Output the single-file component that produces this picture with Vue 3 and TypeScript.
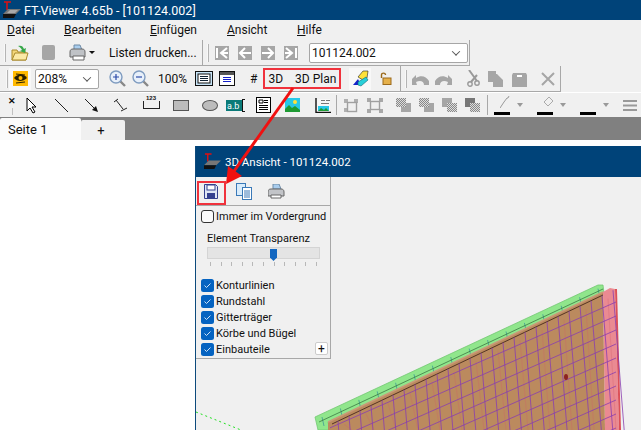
<template>
  <div class="app">
    <header class="titlebar">
      <svg class="logo" width="20" height="18" viewBox="0 0 20 18">
        <path d="M2 1h7M5 1v8" stroke="#e01010" stroke-width="1.5" fill="none" />
        <path d="M6 8h13l-5 5H1z" fill="#777" />
        <path d="M1 13h13l-2 4H1z" fill="#111" />
        <path d="M8 9h8l-3 3H5z" fill="#aaa" />
      </svg>
      <span>FT-Viewer 4.65b - [101124.002]</span>
    </header>

    <nav class="menubar">
      <span v-for="item in menu" :key="item.label" class="menu-item">
        <u>{{ item.label[0] }}</u>{{ item.label.slice(1) }}
      </span>
    </nav>

    <div class="band">
      <div class="group group-file">
        <i class="grip"></i>
        <svg width="18" height="18" viewBox="0 0 18 18">
          <path d="M1 6h5l1 2h8v8H1z" fill="#f3d67a" stroke="#a98a2c" />
          <path d="M1 16l3-7h13l-2 7z" fill="#fbe9a6" stroke="#a98a2c" />
          <path d="M7 2c3-1 5 0 6 3l2-1-1 5-5-2 2-1c-1-2-2-3-4-4z" fill="#37a84a" />
        </svg>
        <span class="stop"></span>
        <svg width="19" height="17" viewBox="0 0 19 17">
          <path d="M5 1h6l2 5H5z" fill="#a9cdee" stroke="#6f8ba6" />
          <path d="M1 8c0-2 1-3 3-3h9c2 0 3 1 3 3v5H1z" fill="#bfc2c6" stroke="#666" />
          <path d="M4 12h11v4H4z" fill="#fff" stroke="#666" />
        </svg>
        <b class="caret"></b>
        <span class="print-list">Listen drucken...</span>
      </div>
      <div class="group group-nav">
        <i class="grip"></i>
        <span v-for="n in navIcons" :key="n" class="nav-btn">
          <svg width="14" height="14" viewBox="0 0 14 14">
            <path :d="n" fill="none" stroke="#fff" stroke-width="2" />
          </svg>
        </span>
        <div class="combo combo-file"><span>101124.002</span><b class="chev"></b></div>
      </div>
    </div>

    <div class="band band-second">
      <div class="group group-view">
        <i class="grip"></i>
        <span class="eye-btn">
          <svg width="15" height="15" viewBox="0 0 15 15">
            <rect width="15" height="15" fill="#ffb900" />
            <path d="M1 7c3-4 9-5 13 0-4 4-10 4-13 0z" fill="#2a2000" />
            <circle cx="7.5" cy="7" r="2" fill="#ffb900" />
            <path d="M3 3l9 1M3 12l9-1" stroke="#2a2000" />
          </svg>
        </span>
        <div class="combo combo-zoom"><span>208%</span><b class="chev"></b></div>
        <svg v-for="sign in ['M-3 0h6M0-3v6', 'M-3 0h6']" :key="sign" class="magnifier" width="17" height="17" viewBox="0 0 17 17">
          <path d="M11 11l5 5" stroke="#888" stroke-width="2.4" />
          <circle cx="7" cy="7" r="6" fill="#e8f0fa" stroke="#7f9cc0" stroke-width="1.4" />
          <path :d="sign" transform="translate(7 7)" stroke="#2a4aa8" stroke-width="1.2" />
        </svg>
        <span class="txt hundred">100%</span>
        <svg class="page-a" width="18" height="15" viewBox="0 0 18 15">
          <rect x=".5" y=".5" width="17" height="14" fill="#c8e4f7" stroke="#111" />
          <rect x="3" y="3" width="12" height="9" fill="#fff" stroke="#111" />
          <path d="M5 5.500h8M5 7.500h8M5 9.500h8" stroke="#123" />
        </svg>
        <svg class="page-b" width="16" height="15" viewBox="0 0 16 15">
          <rect x=".5" y=".5" width="15" height="14" fill="#fff" stroke="#111" />
          <rect x="1" y="1" width="14" height="3" fill="#555" />
          <path d="M4 6.500h8M4 8.500h8M4 10.500h8" stroke="#1420c8" />
        </svg>
        <span class="txt hash">#</span>
        <div class="plan-box">
          <span class="txt">3D</span>
          <span class="txt">3D Plan</span>
        </div>
        <span class="cube-btn">
          <svg width="17" height="17" viewBox="0 0 17 17">
            <path d="M1 15l5-6 3 6z" fill="#1420c8" />
            <path d="M6 7l5-6h5l-1 7-4 2z" fill="#ffe23a" stroke="#222" stroke-width=".6" />
            <path d="M6 12l8-5 2 3-7 6-3-1z" fill="#27cfd8" stroke="#167" stroke-width=".6" />
          </svg>
        </span>
        <svg class="lock" width="12" height="13" viewBox="0 0 12 13">
          <path d="M1.500 6V3c0-2.500 4-2.500 4 0" fill="none" stroke="#9b6a1c" stroke-width="1.4" />
          <rect x="3" y="6" width="8" height="6.500" fill="#e5b04a" stroke="#9b6a1c" />
        </svg>
      </div>
      <div class="group group-edit">
        <i class="grip"></i>
        <svg width="17" height="12" viewBox="0 0 17 12"><path d="M0 6l4-4v3c5-3 10-2 13 3v4H12c0-4-4-5-8-3l1 3H0z" fill="#a6a6a6" /></svg>
        <svg class="redo" width="17" height="12" viewBox="0 0 17 12"><path d="M17 6l-4-4v3C8 2 3 3 0 8v4h5c0-4 4-5 8-3l-1 3h5z" fill="#a6a6a6" /></svg>
        <svg class="scissors" width="13" height="17" viewBox="0 0 13 17">
          <path d="M2 0l8 11M10 5L4 12" stroke="#999" stroke-width="2" />
          <circle cx="3" cy="14" r="2.200" fill="none" stroke="#999" stroke-width="1.4" />
          <circle cx="10" cy="13" r="2.200" fill="none" stroke="#999" stroke-width="1.400" />
        </svg>
        <svg width="15" height="16" viewBox="0 0 15 16"><path d="M0 0h8v3h1l6 6v7H5v-5H0z" fill="#a6a6a6" /></svg>
        <svg width="15" height="16" viewBox="0 0 15 16"><path d="M1 2h13l1 2v12H0V4z" fill="#a6a6a6" /><rect x="5" y="4" width="5" height="2" fill="#fff" /></svg>
        <svg class="cross" width="14" height="14" viewBox="0 0 14 14"><path d="M1 1l12 12M13 1L1 13" stroke="#a6a6a6" stroke-width="2" /></svg>
      </div>
    </div>

    <div class="drawbar">
      <span class="draw-close">✕<i></i></span>
      <svg width="12" height="17" viewBox="0 0 12 17"><path d="M1 1v13l3-3 3 5 2-1-3-5h4z" fill="#fff" stroke="#000" /></svg>
      <svg class="d-line" width="13" height="13" viewBox="0 0 13 13"><path d="M0 0l13 13" stroke="#222" /></svg>
      <svg class="d-arrow" width="13" height="13" viewBox="0 0 13 13"><path d="M0 0l9 9" stroke="#222" /><path d="M13 13l-6-2 4-4z" fill="#111" /></svg>
      <svg class="d-dim" width="15" height="14" viewBox="0 0 15 14"><path d="M1 4l4-3M3 2l7 9M8 13l6-3" stroke="#222" fill="none" /></svg>
      <span class="d-measure"><em>123</em></span>
      <i class="d-rect"></i>
      <i class="d-ellipse"></i>
      <span class="d-text">a.b<b></b></span>
      <svg class="d-note" width="15" height="16" viewBox="0 0 15 16"><rect x=".5" y=".5" width="14" height="15" fill="#fff" stroke="#000" /><path d="M3 3h4v3H3zM8 3.500h4M8 5.500h4M3 8.500h9M3 10.500h9M3 12.500h9" stroke="#000" fill="none" /></svg>
      <svg class="d-image" width="15" height="14" viewBox="0 0 15 14"><rect width="15" height="14" fill="#27c8e8" /><circle cx="10" cy="4" r="2" fill="#ffe23a" /><path d="M0 11l4-4 3 3 3-2 5 4v2H0z" fill="#1e9a33" /></svg>
      <svg class="d-disk" width="16" height="15" viewBox="0 0 16 15"><rect x="1" y="1" width="14" height="13" fill="#f7f7f7" /><path d="M6 2.500h4M11 2.500h4M6 5.500h8" stroke="#777" fill="none" /><path d="M1 0v14.500h15" stroke="#111" stroke-width="1.400" fill="none" /><rect x="3" y="8" width="11" height="5" fill="#27c8e8" /><path d="M3 13l3-3 3 2 2-2 3 3z" fill="#1e9a33" /></svg>
      <i class="sep"></i>
      <svg class="d-frame" width="16" height="15" viewBox="0 0 16 15"><path d="M1 1h4v4H1zM11 1h4v4h-4zM1 10h4v4H1z" fill="#b0b0b0" /><rect x="4.500" y="4.500" width="9" height="9" fill="none" stroke="#a0a0a0" stroke-width="1.400" /></svg>
      <svg class="d-frame2" width="16" height="15" viewBox="0 0 16 15"><path d="M0 0h4v4H0zM12 0h4v4h-4zM0 11h4v4H0zM12 11h4v4h-4z" fill="#a8a8a8" /><rect x="3.500" y="3.500" width="9" height="8" fill="none" stroke="#a0a0a0" stroke-width="1.400" /></svg>
      <span v-for="(o, i) in orders" :key="i" class="overlap" :class="o"><i></i><i></i></span>
      <i class="sep sep-b"></i>
      <div class="swatch"><svg width="11" height="12" viewBox="0 0 11 12"><path d="M0 12l4-6 3-4 1 0 1-2" stroke="#999" fill="none" /></svg><b class="tri"></b><i></i></div>
      <div class="swatch"><svg width="11" height="12" viewBox="0 0 11 12"><path d="M1 6l5-5 4 4-5 5z" fill="none" stroke="#aaa" /></svg><b class="tri"></b><i></i></div>
      <div class="swatch"><span class="blank"></span><b class="tri"></b><i></i></div>
      <svg class="d-weight" width="14" height="11" viewBox="0 0 14 11"><path d="M0 1h14M0 5.500h14M0 10h14" stroke="#999" stroke-width="2" /></svg>
    </div>

    <div class="tabstrip">
      <span class="tab tab-active">Seite 1</span>
      <span class="tab tab-add">+</span>
    </div>

    <main class="workspace">
      <section class="win3d">
        <header class="win-title">
          <svg class="logo" width="19" height="17" viewBox="0 0 20 18">
            <path d="M2 1h7M5 1v8" stroke="#e01010" stroke-width="1.500" fill="none" />
            <path d="M6 8h13l-5 5H1z" fill="#777" />
            <path d="M1 13h13l-2 4H1z" fill="#111" />
          </svg>
          <span>3D Ansicht - 101124.002</span>
        </header>
        <div class="win-body">
          <aside class="panel">
            <div class="panel-tools">
              <span class="tool-save">
                <svg width="14" height="15" viewBox="0 0 14 15">
                  <path d="M.5.5h11l2 2v12H.5z" fill="#dfe6f5" stroke="#35408f" />
                  <rect x="3" y="1" width="8" height="5" fill="#fff" stroke="#35408f" />
                  <rect x="3" y="9" width="8" height="5" fill="#35408f" />
                </svg>
              </span>
              <svg class="tool-copy" width="16" height="17" viewBox="0 0 16 17">
                <rect x=".5" y=".5" width="9" height="12" fill="#d9ecfb" stroke="#3a79b8" />
                <rect x="6.500" y="4.500" width="9" height="12" fill="#fff" stroke="#3a79b8" />
                <path d="M8 8h6M8 10h6M8 12h6M8 14h6" stroke="#3a79b8" />
              </svg>
              <svg class="tool-print" width="17" height="15" viewBox="0 0 17 15">
                <path d="M5 0h6l2 5H5z" fill="#a9cdee" stroke="#6f8ba6" />
                <path d="M0 8c0-2 1-3 3-3h10c2 0 3 1 3 3v4H0z" fill="#c2c4c8" stroke="#666" />
                <path d="M3 11h10v3H3z" fill="#fff" stroke="#666" />
              </svg>
            </div>
            <label class="always">
              <i class="box-empty"></i>
              <span>Immer im Vordergrund</span>
            </label>
            <div class="slider-label">Element Transparenz</div>
            <div class="slider"><i class="thumb"></i></div>
            <div class="ticks"><i v-for="n in 11" :key="n"></i></div>
            <ul class="layers">
              <li v-for="layer in layers" :key="layer">
                <svg width="13" height="13" viewBox="0 0 13 13">
                  <rect width="13" height="13" rx="2.500" fill="#0563c1" />
                  <path d="M3.500 6.500l2 2 4-4" fill="none" stroke="#cfe3f7" />
                </svg>
                <span>{{ layer }}</span>
              </li>
            </ul>
            <span class="plus">+</span>
          </aside>

          <svg class="scene" width="445" height="253" viewBox="0 0 445 253">
            <line x1="0" y1="235" x2="45" y2="253" stroke="#22e022" stroke-dasharray="2 3" />
            <g transform="translate(-196 -177)">
              <polygon points="315,417 598,285 603,285 604,293 328,422 330,430 318,430" fill="#90e68c" stroke="#72c872" stroke-width=".8" />
              <line v-for="l in greenLines" :key="l.id" :x1="l.x1" :y1="l.y1" :x2="l.x2" :y2="l.y2" stroke="#3f9a96" stroke-width=".8" />
              <line x1="319" y1="422" x2="603" y2="289" stroke="#2f6b3a" stroke-width=".7" />
              <polygon points="603,292 610,288 615,289 619,430 605,430" fill="#ea8a92" />
              <polygon points="615,289 617,289 621,430 619,430" fill="#dc5058" />
              <polygon points="328,430 328,422 603,292 605,430" fill="#bb8a5e" />
              <line x1="328" y1="422" x2="603" y2="292" stroke="#c99a78" stroke-width="1.6" />
              <line x1="332" y1="424" x2="603" y2="295" stroke="#3a1e14" stroke-width=".8" />
              <line v-for="l in faintLines" :key="l.id" :x1="l.x1" :y1="l.y1" :x2="l.x2" :y2="l.y2" stroke="#d0606c" stroke-width=".7" opacity=".45" />
              <line v-for="l in gridLines" :key="l.id" :x1="l.x1" :y1="l.y1" :x2="l.x2" :y2="l.y2" stroke="#8a3fb0" stroke-width="1" opacity=".8" />
              <ellipse cx="566" cy="377" rx="2" ry="3" fill="#8c2420" />
            </g>
          </svg>
        </div>
      </section>
    </main>

    <svg class="pointer" width="641" height="430" viewBox="0 0 641 430">
      <path d="M293 88L232 174" stroke="#f01010" stroke-width="3" />
      <path d="M226 184L228 166 242 176z" fill="#f01010" />
    </svg>
    <i class="save-box"></i>
  </div>
</template>

<script setup lang="ts">
interface Segment {
  id: number;
  x1: number;
  y1: number;
  x2: number;
  y2: number;
}

const menu = [
  { label: 'Datei' },
  { label: 'Bearbeiten' },
  { label: 'Einfügen' },
  { label: 'Ansicht' },
  { label: 'Hilfe' },
];

const navIcons = [
  'M2 2v10M12 2L6 7l6 5M6 7h7',
  'M7 2L2 7l5 5M2 7h11',
  'M7 2l5 5-5 5M12 7H1',
  'M12 2v10M2 2l6 5-6 5M8 7H1',
];

const orders = ['o-a', 'o-b', 'o-c', 'o-d'];
const layers = ['Konturlinien', 'Rundstahl', 'Gitterträger', 'Körbe und Bügel', 'Einbauteile'];

const greenLines: Segment[] = Array.from({ length: 16 }, (_, i) => {
  const x = 322 + i * 18.4;
  const y = 419 - (x - 322) * 0.465;
  return { id: i, x1: x, y1: y - 2, x2: x + 2, y2: y + 7 };
});

// wall grid: tilted uprights plus rows that rise to the right
const topEdge = (x: number) => 424 - (x - 332) * 0.476;

const gridLines: Segment[] = [
  ...Array.from({ length: 26 }, (_, i) => {
    const x = 338 + i * 11;
    return { id: i, x1: x, y1: topEdge(x), x2: x + (430 - topEdge(x)) * 0.08, y2: 430 };
  }),
  ...Array.from({ length: 12 }, (_, i) => {
    const y = 302 + i * 14;
    return { id: 100 + i, x1: 616, y1: y, x2: 330, y2: y + 286 * 0.44 };
  }),
];

const faintLines: Segment[] = Array.from({ length: 13 }, (_, i) => {
  const x = 344 + i * 22;
  return { id: i, x1: x, y1: topEdge(x) + 6, x2: x + 8, y2: 430 };
});
</script>

<style scoped>
.app {
  position: relative;
  width: 641px;
  height: 430px;
  overflow: hidden;
  background: #fff;
  font-family: Roboto, "Liberation Sans", sans-serif;
  font-size: 12px;
  color: #111;
  display: flex;
  flex-direction: column;
}
.titlebar {
  height: 20px;
  flex: none;
  background: #004379;
  color: #fff;
  display: flex;
  align-items: center;
  padding-left: 2px;
  gap: 2px;
  font-size: 12.5px;
}
.menubar {
  height: 20px;
  flex: none;
  background: #f0f0f0;
  display: flex;
  align-items: center;
}
.menu-item:nth-child(1) { margin-left: 7px; width: 57px; }
.menu-item:nth-child(2) { width: 86px; }
.menu-item:nth-child(3) { width: 77px; }
.menu-item:nth-child(4) { width: 70px; }
.band {
  height: 26px;
  flex: none;
  background: #f0f0f0;
  display: flex;
}
.group {
  height: 25px;
  display: flex;
  align-items: center;
  border-right: 1px solid #a8a8a8;
  border-bottom: 1px solid #a8a8a8;
  box-sizing: content-box;
}
.grip {
  width: 1px;
  height: 18px;
  background: #f8f8f8;
  border: 1px solid #b4b4b4;
  border-width: 0 1px 0 0;
  flex: none;
}
.group-file { width: 203px; padding-left: 4px; box-sizing: border-box; height: 26px; }
.group-file svg:nth-of-type(1) { margin-left: 5px; }
.stop {
  width: 13px;
  height: 15px;
  border-radius: 2px;
  background: #a6a6a6;
  margin-left: 13px;
}
.group-file svg:nth-of-type(2) { margin-left: 14px; }
.caret {
  width: 0;
  height: 0;
  border: 3px solid transparent;
  border-top: 3px solid #111;
  border-bottom: 0;
  margin-left: 1px;
}
.print-list { margin-left: 14px; white-space: nowrap; }
.group-nav { width: 267px; padding-left: 4px; box-sizing: border-box; height: 26px; }
.nav-btn {
  width: 14px;
  height: 14px;
  background: #a6a6a6;
  margin-left: 9px;
  display: flex;
}
.nav-btn:nth-of-type(1) { margin-left: 6px; }
.combo {
  height: 20px;
  box-sizing: border-box;
  background: #fff;
  border: 1px solid #a6a6a6;
  border-radius: 2px;
  display: flex;
  align-items: center;
  justify-content: space-between;
  padding: 0 8px 0 2px;
  flex: none;
}
.combo-file { width: 159px; margin-left: 11px; }
.combo-zoom { width: 64px; margin-left: 4px; }
.chev {
  width: 5px;
  height: 5px;
  border-right: 1px solid #555;
  border-bottom: 1px solid #555;
  transform: rotate(45deg) translate(-1px, -1px);
}
.band-second { height: 26px; }
.group-view { width: 401px; padding-left: 6px; box-sizing: border-box; height: 26px; }
.eye-btn {
  width: 22px;
  height: 22px;
  margin-left: 1px;
  background: #f8f8f8;
  display: flex;
  align-items: center;
  justify-content: center;
}
.magnifier { margin-left: 10px; }
.magnifier + .magnifier { margin-left: 6px; }
.txt { white-space: nowrap; }
.hundred { margin-left: 9px; }
.page-a { margin-left: 8px; }
.page-b { margin-left: 6px; }
.hash { margin-left: 15px; }
.plan-box {
  width: 78px;
  height: 21px;
  box-sizing: border-box;
  margin-left: 6px;
  border: 2px solid #f0323c;
  display: flex;
  align-items: center;
  gap: 12px;
  padding-left: 3px;
}
.cube-btn {
  width: 22px;
  height: 22px;
  margin-left: 8px;
  background: #f8f8f8;
  display: flex;
  align-items: center;
  justify-content: center;
}
.lock { margin-left: 9px; }
.group-edit { width: 160px; padding-left: 4px; box-sizing: border-box; height: 26px; }
.group-edit .grip { margin-right: 5px; }
.redo { margin-left: 6px; }
.scissors { margin-left: 15px; }
.group-edit svg:nth-of-type(4) { margin-left: 8px; }
.group-edit svg:nth-of-type(5) { margin-left: 9px; }
.cross { margin-left: 14px; }
.drawbar {
  height: 25px;
  flex: none;
  background: #f0f0f0;
  border-top: 1px solid #fff;
  box-sizing: border-box;
  display: flex;
  align-items: center;
}
.draw-close {
  width: 26px;
  height: 20px;
  padding-left: 8px;
  box-sizing: border-box;
  font-size: 9px;
  font-weight: 700;
  line-height: 12px;
  position: relative;
}
.draw-close i {
  position: absolute;
  left: 12px;
  top: 13px;
  width: 1px;
  height: 7px;
  background: #c0c0c0;
}
.d-line { margin-left: 17px; }
.d-arrow { margin-left: 17px; }
.d-dim { margin-left: 15px; }
.d-measure {
  width: 15px;
  height: 7px;
  margin-left: 15px;
  border: solid #222;
  border-width: 0 1px;
  border-bottom: 1px solid #222;
  display: block;
  position: relative;
}
.d-measure em {
  position: absolute;
  top: -6px;
  left: 2px;
  font: 700 6px "Liberation Sans", sans-serif;
}
.d-rect { width: 16px; height: 11px; margin-left: 13px; background: #bcbcbc; border: 1px solid #555; box-sizing: border-box; }
.d-ellipse { width: 16px; height: 11px; margin-left: 13px; background: #bcbcbc; border: 1px solid #555; border-radius: 50%; box-sizing: border-box; }
.d-text {
  width: 15px;
  height: 11px;
  margin-left: 8px;
  background: #0a7a78;
  color: #fff;
  font-size: 9px;
  line-height: 12px;
  padding-left: 1px;
  position: relative;
}
.d-text b {
  position: absolute;
  right: -3px;
  top: -1px;
  width: 3px;
  height: 13px;
  border: 1px solid #111;
  border-right: 0;
  box-sizing: border-box;
}
.d-note { margin-left: 14px; }
.d-image { margin-left: 14px; }
.d-disk { margin-left: 15px; flex: none; }
.sep { width: 1px; height: 20px; background: #a8a8a8; margin-left: 5px; flex: none; }
.d-frame { margin-left: 6px; }
.d-frame2 { margin-left: 8px; }
.overlap { width: 15px; height: 14px; position: relative; margin-left: 8px; flex: none; }
.overlap.o-a { margin-left: 13px; }
.overlap i { position: absolute; width: 10px; height: 9px; }
.overlap i:first-child { left: 0; top: 0; background: repeating-conic-gradient(#888 0 25%, #ddd 0 50%) 0 0 / 2px 2px; z-index: 1; }
.overlap i:last-child { right: 0; bottom: 0; background: #a6a6a6; }
.o-c i:first-child, .o-d i:first-child { background: #a6a6a6; }
.o-c i:last-child, .o-d i:last-child { background: repeating-conic-gradient(#888 0 25%, #ddd 0 50%) 0 0 / 2px 2px; z-index: 2; }
.o-d i:first-child { background: #777; }
.sep-b { margin-left: 7px; }
.swatch {
  width: 38px;
  height: 20px;
  margin-left: 5px;
  position: relative;
  flex: none;
}
.swatch + .swatch { margin-left: 5px; }
.swatch svg { position: absolute; left: 7px; top: 1px; }
.swatch .tri {
  position: absolute;
  left: 24px;
  top: 8px;
  border: 3px solid transparent;
  border-top: 4px solid #999;
  border-bottom: 0;
}
.swatch i { position: absolute; left: 1px; bottom: 0; width: 16px; height: 3px; background: #000; }
.blank { display: block; }
.d-weight { margin-left: 6px; flex: none; }
.tabstrip {
  height: 23px;
  flex: none;
  background: #808080;
  display: flex;
  align-items: flex-end;
}
.tab {
  display: flex;
  align-items: center;
  box-sizing: border-box;
}
.tab-active {
  width: 81px;
  height: 22px;
  background: #fbfbfb;
  padding-left: 8px;
  font-size: 13px;
  border-radius: 2px 2px 0 0;
}
.tab-add {
  width: 44px;
  height: 20px;
  background: #f0f0f0;
  justify-content: center;
  padding-right: 4px;
  font-size: 13px;
  border-radius: 2px 2px 0 0;
}
.workspace {
  flex: 1;
  position: relative;
  background: #fff;
}
.win3d {
  position: absolute;
  left: 195px;
  top: 6px;
  right: 0;
  bottom: 0;
  border-left: 1px solid #0d4a7c;
  background: #f0f0f0;
  display: flex;
  flex-direction: column;
}
.win-title {
  height: 31px;
  flex: none;
  background: #004379;
  color: #fff;
  display: flex;
  align-items: center;
  gap: 3px;
  padding-left: 7px;
  font-size: 11.5px;
}
.win-body {
  flex: 1;
  position: relative;
}
.panel {
  width: 135px;
  height: 182px;
  box-sizing: border-box;
  border-right: 1px solid #a8a8a8;
  border-bottom: 1px solid #a8a8a8;
  position: relative;
  z-index: 1;
  font-size: 11px;
}
.panel-tools {
  height: 28px;
  border-bottom: 1px solid #a8a8a8;
  display: flex;
  align-items: center;
  padding-left: 8px;
}
.tool-copy { margin-left: 18px; }
.tool-print { margin-left: 16px; }
.tool-save { display: flex; }
.always {
  display: flex;
  align-items: center;
  gap: 2px;
  margin: 3px 0 0 5px;
  height: 14px;
  white-space: nowrap;
}
.box-empty {
  width: 13px;
  height: 13px;
  box-sizing: border-box;
  border: 1px solid #333;
  border-radius: 3px;
  background: #fbfbfb;
}
.slider-label { margin: 9px 0 0 11px; line-height: 14px; }
.slider {
  width: 113px;
  height: 12px;
  box-sizing: border-box;
  margin: 1px 0 0 11px;
  background: #e4e4e4;
  border: 1px solid #d4d4d4;
  position: relative;
}
.thumb {
  position: absolute;
  left: 62px;
  top: 1px;
  width: 7px;
  height: 12px;
  background: #1367c0;
  clip-path: polygon(0 0, 100% 0, 100% 70%, 50% 100%, 0 70%);
}
.ticks {
  width: 107px;
  margin: 3px 0 0 14px;
  display: flex;
  justify-content: space-between;
}
.ticks i { width: 1px; height: 4px; background: #b8b8b8; }
.layers {
  list-style: none;
  margin: 11px 0 0 5px;
  padding: 0;
}
.layers li {
  height: 16px;
  display: flex;
  align-items: center;
  gap: 2px;
}
.plus {
  position: absolute;
  right: 2px;
  bottom: 3px;
  width: 13px;
  height: 13px;
  background: #fff;
  border: 1px solid #ccc;
  border-radius: 2px;
  box-sizing: border-box;
  display: flex;
  align-items: center;
  justify-content: center;
  font-size: 12px;
  line-height: 1;
}
.scene {
  position: absolute;
  left: 0;
  top: 0;
}
.pointer {
  position: absolute;
  left: 0;
  top: 0;
  pointer-events: none;
}
.save-box {
  position: absolute;
  left: 197px;
  top: 181px;
  width: 29px;
  height: 24px;
  box-sizing: border-box;
  border: 2px solid #f0323c;
}
</style>

<style>
html, body { margin: 0; overflow: hidden; }
</style>
